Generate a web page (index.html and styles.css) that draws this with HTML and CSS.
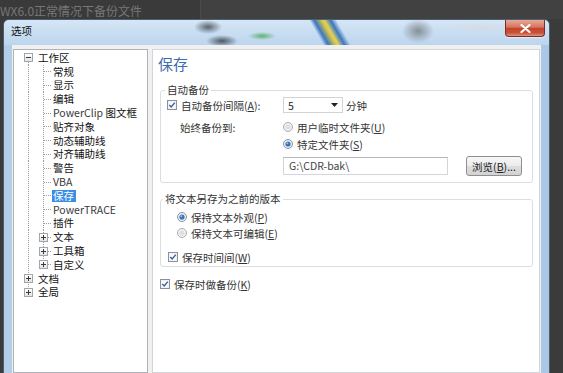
FILE: index.html
```html
<!DOCTYPE html>
<html lang="zh-CN">
<head>
<meta charset="utf-8">
<title>选项</title>
<link rel="stylesheet" href="styles.css">
</head>
<body>
<div class="screen">
  <div class="backdrop">
    <span class="caption">WX6.0正常情况下备份文件</span>
    <span class="other"></span>
  </div>
  <div class="dialog">
    <div class="titlebar">
      <span class="title">选项</span>
      <span class="close"><svg width="11" height="9" viewBox="0 0 11 9"><path d="M1.5 1 9.5 8M9.5 1 1.5 8" stroke="#fff" stroke-width="2.2" stroke-linecap="round"/></svg></span>
    </div>
    <div class="client">
      <ul class="tree">
        <li class="row top first"><span class="exp minus"></span><span class="lbl">工作区</span></li>
        <li class="row kid"><span class="lbl">常规</span></li>
        <li class="row kid"><span class="lbl">显示</span></li>
        <li class="row kid"><span class="lbl">编辑</span></li>
        <li class="row kid"><span class="lbl latin">PowerClip <span class="cjk">图文框</span></span></li>
        <li class="row kid"><span class="lbl">贴齐对象</span></li>
        <li class="row kid"><span class="lbl">动态辅助线</span></li>
        <li class="row kid"><span class="lbl">对齐辅助线</span></li>
        <li class="row kid"><span class="lbl">警告</span></li>
        <li class="row kid"><span class="lbl latin">VBA</span></li>
        <li class="row kid"><span class="lbl sel">保存</span></li>
        <li class="row kid"><span class="lbl latin">PowerTRACE</span></li>
        <li class="row kid"><span class="lbl">插件</span></li>
        <li class="row kid branch"><span class="exp plus"></span><span class="lbl">文本</span></li>
        <li class="row kid branch"><span class="exp plus"></span><span class="lbl">工具箱</span></li>
        <li class="row kid branch lastkid"><span class="exp plus"></span><span class="lbl">自定义</span></li>
        <li class="row top"><span class="exp plus"></span><span class="lbl">文档</span></li>
        <li class="row top last"><span class="exp plus"></span><span class="lbl">全局</span></li>
      </ul>
      <div class="page">
        <h1 class="heading">保存</h1>
        <fieldset class="group g1">
          <legend>自动备份</legend>
          <div class="r r1">
            <span class="c1"><label class="opt"><svg width="10" height="10" viewBox="0 0 10 10"><rect x=".5" y=".5" width="9" height="9" fill="#e9ebee" stroke="#8e9196"/><rect x="1.5" y="1.5" width="7" height="7" fill="#f8f9fa"/><path d="M2.3 4.9 4.2 6.9 7.8 2.6" fill="none" stroke="#3b5ea6" stroke-width="1.4"/></svg>自动备份间隔(<u>A</u>):</label></span>
            <span class="combo"><span>5</span><svg width="7" height="4" viewBox="0 0 7 4"><path d="M0 0h7L3.5 4z" fill="#222"/></svg></span>
            <span class="unit">分钟</span>
          </div>
          <div class="r r2">
            <span class="c1">始终备份到:</span>
            <label class="opt"><svg width="10" height="10" viewBox="0 0 10 10"><circle cx="5" cy="5" r="4.5" fill="#f1f2f4" stroke="#a9acb0"/><circle cx="5" cy="5" r="2.6" fill="#dcdfe3"/></svg>用户临时文件夹(<u>U</u>)</label>
          </div>
          <div class="r r3">
            <span class="c1"></span>
            <label class="opt"><svg width="10" height="10" viewBox="0 0 10 10"><circle cx="5" cy="5" r="4.5" fill="#eef0f3" stroke="#8e9196"/><circle cx="5" cy="5" r="2.6" fill="#2f72c6"/><circle cx="4.4" cy="4.3" r="1" fill="#8fc0f0"/></svg>特定文件夹(<u>S</u>)</label>
          </div>
          <div class="r r4">
            <span class="c1"></span>
            <span class="field">G:\CDR-bak\</span>
            <span class="btn">浏览(<u>B</u>)...</span>
          </div>
        </fieldset>
        <fieldset class="group g2">
          <legend>将文本另存为之前的版本</legend>
          <div class="r ind">
            <label class="opt"><svg width="10" height="10" viewBox="0 0 10 10"><circle cx="5" cy="5" r="4.5" fill="#eef0f3" stroke="#8e9196"/><circle cx="5" cy="5" r="2.6" fill="#2f72c6"/><circle cx="4.4" cy="4.3" r="1" fill="#8fc0f0"/></svg>保持文本外观(<u>P</u>)</label>
          </div>
          <div class="r ind">
            <label class="opt"><svg width="10" height="10" viewBox="0 0 10 10"><circle cx="5" cy="5" r="4.5" fill="#f1f2f4" stroke="#a9acb0"/><circle cx="5" cy="5" r="2.6" fill="#dcdfe3"/></svg>保持文本可编辑(<u>E</u>)</label>
          </div>
          <div class="r chkrow">
            <label class="opt"><svg width="10" height="10" viewBox="0 0 10 10"><rect x=".5" y=".5" width="9" height="9" fill="#e9ebee" stroke="#8e9196"/><rect x="1.5" y="1.5" width="7" height="7" fill="#f8f9fa"/><path d="M2.3 4.9 4.2 6.9 7.8 2.6" fill="none" stroke="#3b5ea6" stroke-width="1.4"/></svg>保存时间间(<u>W</u>)</label>
          </div>
        </fieldset>
        <div class="r solo">
          <label class="opt"><svg width="10" height="10" viewBox="0 0 10 10"><rect x=".5" y=".5" width="9" height="9" fill="#e9ebee" stroke="#8e9196"/><rect x="1.5" y="1.5" width="7" height="7" fill="#f8f9fa"/><path d="M2.3 4.9 4.2 6.9 7.8 2.6" fill="none" stroke="#3b5ea6" stroke-width="1.4"/></svg>保存时做备份(<u>K</u>)</label>
        </div>
      </div>
    </div>
  </div>
</div>
</body>
</html>
```

FILE: styles.css
```css
* { box-sizing: border-box; }
html, body { margin: 0; padding: 0; }
body {
  width: 563px;
  height: 373px;
  overflow: hidden;
  background: #3b3b3b;
  font-family: "Noto Sans CJK SC", "Noto Sans", sans-serif;
  font-size: 10.5px;
  color: #2a2a2a;
}
.screen { height: 373px; display: flex; flex-direction: column; }

.backdrop { height: 19px; flex: none; display: flex; }
.caption {
  width: 200px; flex: none; padding-left: 0;
  font-size: 12px; line-height: 21px; color: #777;
  white-space: nowrap; background: #3a3a3a;
}
.other { flex: 1; background: #414141; border-left: 1px solid #4a4a4a; }

.dialog {
  flex: 1; min-height: 0;
  margin-left: 3px; width: 547px;
  border: 1px solid #4d5e70; border-bottom: none;
  border-radius: 6px 6px 0 0;
  background: linear-gradient(to right, #b3cde8, #c7dcf1 30%, #c2d8ef 70%, #aac8e6);
  display: flex; flex-direction: column; overflow: hidden;
}

.titlebar {
  height: 25px; flex: none;
  display: flex; justify-content: space-between; align-items: flex-start;
  background:
    radial-gradient(ellipse 14px 7px at 204px 7px, rgba(50,58,68,.75), rgba(50,58,68,0)),
    radial-gradient(ellipse 16px 6px at 218px 21px, rgba(45,55,65,.8), rgba(45,55,65,0)),
    radial-gradient(ellipse 14px 4px at 258px 16px, rgba(80,170,90,.85), rgba(80,170,90,0)),
    radial-gradient(ellipse 16px 12px at 414px 11px, rgba(95,100,105,.65), rgba(95,100,105,0)),
    radial-gradient(ellipse 34px 6px at 476px 8px, rgba(215,218,222,.7), rgba(215,218,222,0)),
    linear-gradient(60deg, rgba(0,0,0,0) 28%, #3b76c0 36%, #d6c64a 48%, #e0d060 52%, #3b76c0 62%, rgba(0,0,0,0) 72%) 302px 0 / 48px 25px no-repeat,
    linear-gradient(to bottom, #d5e6f6, #bcd5ee);
}
.title { margin: 5px 0 0 7px; line-height: 12px; color: #111; }
.close {
  width: 40px; height: 17px; margin-right: 4px;
  border: 1px solid #7b2d22; border-top: none;
  border-radius: 0 0 4px 4px;
  background: linear-gradient(to bottom, #e8a898, #d67560 45%, #c4442b 52%, #c9503a 80%, #e0937c);
  display: flex; align-items: center; justify-content: center;
  box-shadow: 0 1px 1px rgba(255,255,255,.5);
}

.client {
  flex: 1; min-height: 0;
  margin: 0 8px;
  padding: 4px 1px 0;
  background: #f0f0f0;
  display: flex; gap: 4px;
}

/* tree */
.tree {
  --v: repeating-linear-gradient(to bottom, #9c9c9c 0 1px, transparent 1px 2px);
  --h: repeating-linear-gradient(to right, #9c9c9c 0 1px, transparent 1px 2px);
  width: 135px; flex: none;
  margin: 0; padding: 1px 0 0; list-style: none;
  background: #fff; border: 1px solid #aeb3b9;
  color: #111;
}
.row {
  height: 13.8px;
  display: flex; align-items: center;
  background-repeat: no-repeat;
}
.top {
  padding-left: 10px;
  background-image: var(--v);
  background-position: 14px 0;
  background-size: 1px 100%;
}
.top.first { background-position: 14px 100%; background-size: 1px 50%; }
.top.last { background-position: 14px 0; background-size: 1px 50%; }
.top .exp { margin-right: 4px; }
.kid {
  padding-left: 38px;
  background-image: var(--v), var(--v), var(--h);
  background-position: 14px 0, 29px 0, 30px 50%;
  background-size: 1px 100%, 1px 100%, 8px 1px;
}
.kid.branch { padding-left: 25px; }
.kid.branch .exp { margin-right: 4px; }
.kid.lastkid { background-size: 1px 100%, 1px 50%, 8px 1px; }

.exp {
  width: 9px; height: 9px; flex: none;
  border: 1px solid #a2a6ab;
  background:
    linear-gradient(#3a3a3a, #3a3a3a) center / 5px 1px no-repeat,
    linear-gradient(#ffffff, #e2e4e7);
}
.exp.plus {
  background:
    linear-gradient(#3a3a3a, #3a3a3a) center / 5px 1px no-repeat,
    linear-gradient(#3a3a3a, #3a3a3a) center / 1px 5px no-repeat,
    linear-gradient(#ffffff, #e2e4e7);
}
.lbl { padding: 0 1px; line-height: 12px; white-space: nowrap; }
.lbl.latin { color: #3a3a3a; }
.lbl .cjk { color: #111; }
.lbl.sel { background: #3a8ee6; color: #fff; padding: 0 2px 0 1px; }

/* right page */
.page {
  width: 388px; flex: none;
  border: 1px solid #d3d5d8;
  background: #fff;
  padding: 5px 0 0 5px;
  color: #333;
}
.heading {
  margin: 0; font-size: 15px; line-height: 18px;
  font-weight: normal; color: #3d6cad;
}
.group {
  margin: 10px 6px 0 2px;
  padding: 0 0 6px;
  border: 1px solid #d9dee3;
  border-radius: 3px;
  min-width: 0;
}
.group legend { padding: 0 2px; margin-left: 4px; line-height: 14px; color: #333; }
.g2 { margin-top: 9px; padding-top: 3px; padding-bottom: 1px; }
.g2 legend { margin-left: 2px; }

.r { display: flex; align-items: center; height: 16px; white-space: nowrap; }
.c1 { width: 122px; flex: none; display: flex; align-items: center; }
.r1 .c1 { padding-left: 6px; }
.r2 { margin-top: 6px; }
.r2 .c1 { padding-left: 19px; }
.r3 { margin-top: 1px; }
.r4 { margin-top: 4px; height: 20px; }
.ind { padding-left: 16px; }
.chkrow { margin-top: 8px; padding-left: 7px; }
.solo { margin: 9px 0 0 2px; }

.opt { display: flex; align-items: center; white-space: nowrap; }
.opt svg { flex: none; margin-right: 4px; }
u { text-decoration-thickness: 1px; text-underline-offset: 1px; }

.combo {
  width: 60px; height: 16px; flex: none;
  border: 1px solid #d0d4d9;
  display: flex; align-items: center; justify-content: space-between;
  padding: 0 4px 0 4px;
  background: #fff; color: #222;
}
.unit { margin-left: 3px; }
.field {
  width: 165px; height: 18px; flex: none;
  border: 1px solid #d2d6db; border-top-color: #b3b6bc;
  padding-left: 5px; line-height: 16px; color: #444;
}
.btn {
  margin-left: 18px; width: 56px; height: 20px; flex: none;
  border: 1px solid #8d8f92; border-radius: 3px;
  background: linear-gradient(to bottom, #f7f7f7, #ececec 50%, #dedede 51%, #d3d3d3);
  display: flex; align-items: center; justify-content: center;
  color: #222;
}
```
